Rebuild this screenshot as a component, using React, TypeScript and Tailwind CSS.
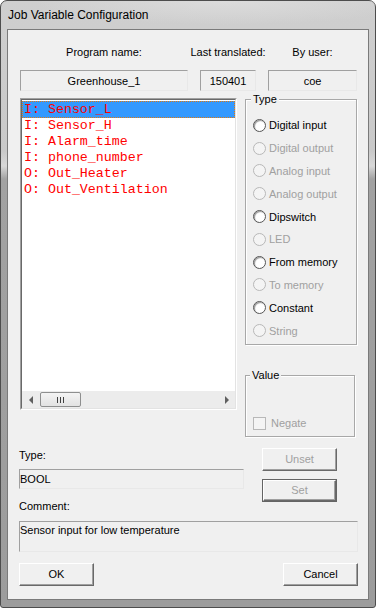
import React from "react";

const font = "font-['Liberation_Sans',Arial,sans-serif]";

function Field({ className = "", children, center = false }: { className?: string; children?: React.ReactNode; center?: boolean }) {
  return (
    <div
      className={`border border-t-[#a0a0a0] border-l-[#a0a0a0] border-b-[#e8e8e8] border-r-[#e8e8e8] bg-[#f0f0f0] text-[11px] leading-[14px] text-black flex ${center ? "justify-center items-center" : "items-start pl-[0px] pt-[3px]"} ${className}`}
    >
      {children}
    </div>
  );
}

function Radio({ label, enabled }: { label: string; enabled: boolean }) {
  return (
    <div className="h-[22.8px] flex items-center">
      <div
        className={`w-[13px] h-[13px] rounded-full border ${
          enabled
            ? "border-[#555] bg-white shadow-[inset_1px_1px_1px_#999]"
            : "border-[#b8b8b8] bg-[#f4f4f4]"
        }`}
      />
      <span className={`ml-[3px] text-[11px] leading-[14px] ${enabled ? "text-black" : "text-[#a0a0a0]"}`}>{label}</span>
    </div>
  );
}

function Button({ label, def = false, className = "", disabled = false }: { label: string; def?: boolean; className?: string; disabled?: boolean }) {
  return (
    <div className={`w-[75px] h-[23px] ${def ? "border border-[#646464]" : ""} ${className}`}>
      <div
        className={`w-full h-full border border-t-white border-l-white border-b-[#696969] border-r-[#696969] bg-[#f0f0f0] flex items-center justify-center shadow-[inset_-1px_-1px_0_#a0a0a0] text-[11px] ${disabled ? "text-[#a0a0a0]" : "text-black"}`}
      >
        {label}
      </div>
    </div>
  );
}

export default function App() {
  const rows = [
    "I: Sensor_L",
    "I: Sensor_H",
    "I: Alarm_time",
    "I: phone_number",
    "O: Out_Heater",
    "O: Out_Ventilation",
  ];
  const radios: [string, boolean][] = [
    ["Digital input", true],
    ["Digital output", false],
    ["Analog input", false],
    ["Analog output", false],
    ["Dipswitch", true],
    ["LED", false],
    ["From memory", true],
    ["To memory", false],
    ["Constant", true],
    ["String", false],
  ];
  return (
    <div className={`w-[376px] h-[608px] bg-white ${font}`}>
      <div className="w-[376px] h-[608px] rounded-t-[7px] rounded-b-[3px] border border-[#4d4d4d] bg-[linear-gradient(to_bottom,#cfcfcf_0px,#c9c9c9_150px,#d8d8d8_165px,#a2a2a2_178px,#9c9c9c_100%)] flex flex-col">
        <div className="h-[28px] flex items-center pl-[7px] text-[12px] text-black bg-[radial-gradient(ellipse_at_60%_0%,#dcdcdc,transparent_60%)]">
          Job Variable Configuration
        </div>
        <div className="mx-[6px] h-[571px] border border-[#7a7a7a] bg-[#f0f0f0] flex flex-col">
          <div className="mt-[15px] h-[14px] flex text-[11px] leading-[14px] text-black">
            <div className="ml-[12px] w-[168px] text-center">Program name:</div>
            <div className="ml-[12px] w-[56px] flex justify-center whitespace-nowrap">Last translated:</div>
            <div className="ml-[12px] w-[89px] text-center">By user:</div>
          </div>
          <div className="mt-[11px] flex">
            <Field center className="ml-[12px] w-[168px] h-[21px]">Greenhouse_1</Field>
            <Field center className="ml-[12px] w-[56px] h-[21px]">150401</Field>
            <Field center className="ml-[12px] w-[89px] h-[21px]">coe</Field>
          </div>
          <div className="mt-[7px] flex items-start">
            <div className="ml-[12px] w-[217px] h-[312px] border border-t-[#a0a0a0] border-l-[#a0a0a0] border-b-white border-r-white">
              <div className="w-full h-full border border-t-[#696969] border-l-[#696969] border-b-[#e3e3e3] border-r-[#e3e3e3] bg-white flex flex-col">
                <div className="flex-1 pt-[1px] font-['Liberation_Mono',monospace] text-[13.3px] text-[#ff0000]">
                  {rows.map((r, i) => (
                    <div
                      key={r}
                      className={`pl-[1px] whitespace-pre ${
                        i === 0
                          ? "h-[17px] leading-[15px] bg-[#3399ff] border border-dotted border-[#e07a10]"
                          : "h-[16px] leading-[16px] pl-[2px]"
                      }`}
                    >
                      {r}
                    </div>
                  ))}
                </div>
                <div className="h-[17px] bg-[#ececec] flex items-center">
                  <div className="w-[17px] h-[17px] flex items-center justify-center">
                    <div className="w-0 h-0 border-y-[4px] border-y-transparent border-r-[4px] border-r-[#606060]" />
                  </div>
                  <div className="ml-[1px] w-[41px] h-[15px] rounded-[2px] border border-[#8e8f8f] bg-[linear-gradient(to_bottom,#f4f4f4,#e2e2e2)] flex items-center justify-center gap-[1px]">
                    <div className="w-[1px] h-[6px] bg-[#404040]" />
                    <div className="w-[1px] h-[6px] bg-[#404040] ml-[1px]" />
                    <div className="w-[1px] h-[6px] bg-[#404040] ml-[1px]" />
                  </div>
                  <div className="flex-1" />
                  <div className="w-[17px] h-[17px] flex items-center justify-center">
                    <div className="w-0 h-0 border-y-[4px] border-y-transparent border-l-[4px] border-l-[#606060]" />
                  </div>
                </div>
              </div>
            </div>
            <div className="ml-[8px] flex flex-col">
              <div className="relative mt-[1px] w-[112px] h-[246px] border border-[#a8a8a8] shadow-[inset_1px_1px_0_#fff,1px_1px_0_#fff] pl-[7px] pt-[14px]">
                <span className="absolute left-[5px] top-[-8px] px-[2px] bg-[#f0f0f0] text-[11px] leading-[14px] text-black">Type</span>
                {radios.map(([l, e]) => (
                  <Radio key={l} label={l} enabled={e} />
                ))}
              </div>
              <div className="relative mt-[30px] w-[110px] h-[62px] border border-[#a8a8a8] shadow-[inset_1px_1px_0_#fff,1px_1px_0_#fff] pl-[7px] pt-[40px]">
                <span className="absolute left-[4px] top-[-8px] px-[2px] bg-[#f0f0f0] text-[11px] leading-[14px] text-black">Value</span>
                <div className="flex items-center">
                  <div className="w-[13px] h-[13px] border border-[#b8b8b8] bg-[#f4f4f4]" />
                  <span className="ml-[5px] text-[11px] leading-[14px] text-[#a0a0a0]">Negate</span>
                </div>
              </div>
            </div>
          </div>
          <div className="mt-[11px] flex items-start">
            <div className="ml-[11px] w-[225px] flex flex-col">
              <div className="h-[14px] text-[11px] leading-[14px] text-black">Type:</div>
              <Field className="mt-[7px] h-[20px] !pt-[2px]">BOOL</Field>
              <div className="mt-[10px] h-[14px] text-[11px] leading-[14px] text-black">Comment:</div>
            </div>
            <div className="ml-[18px] flex flex-col">
              <Button label="Unset" disabled />
              <Button label="Set" def disabled className="mt-[8px]" />
            </div>
          </div>
          <Field className="ml-[11px] mt-[8px] w-[339px] h-[31px] !pt-[1px]">Sensor input for low temperature</Field>
          <div className="mt-[11px] flex">
            <div className="ml-[11px]">
              <Button label="OK" />
            </div>
            <div className="ml-[189px]">
              <Button label="Cancel" />
            </div>
          </div>
        </div>
      </div>
    </div>
  );
}
